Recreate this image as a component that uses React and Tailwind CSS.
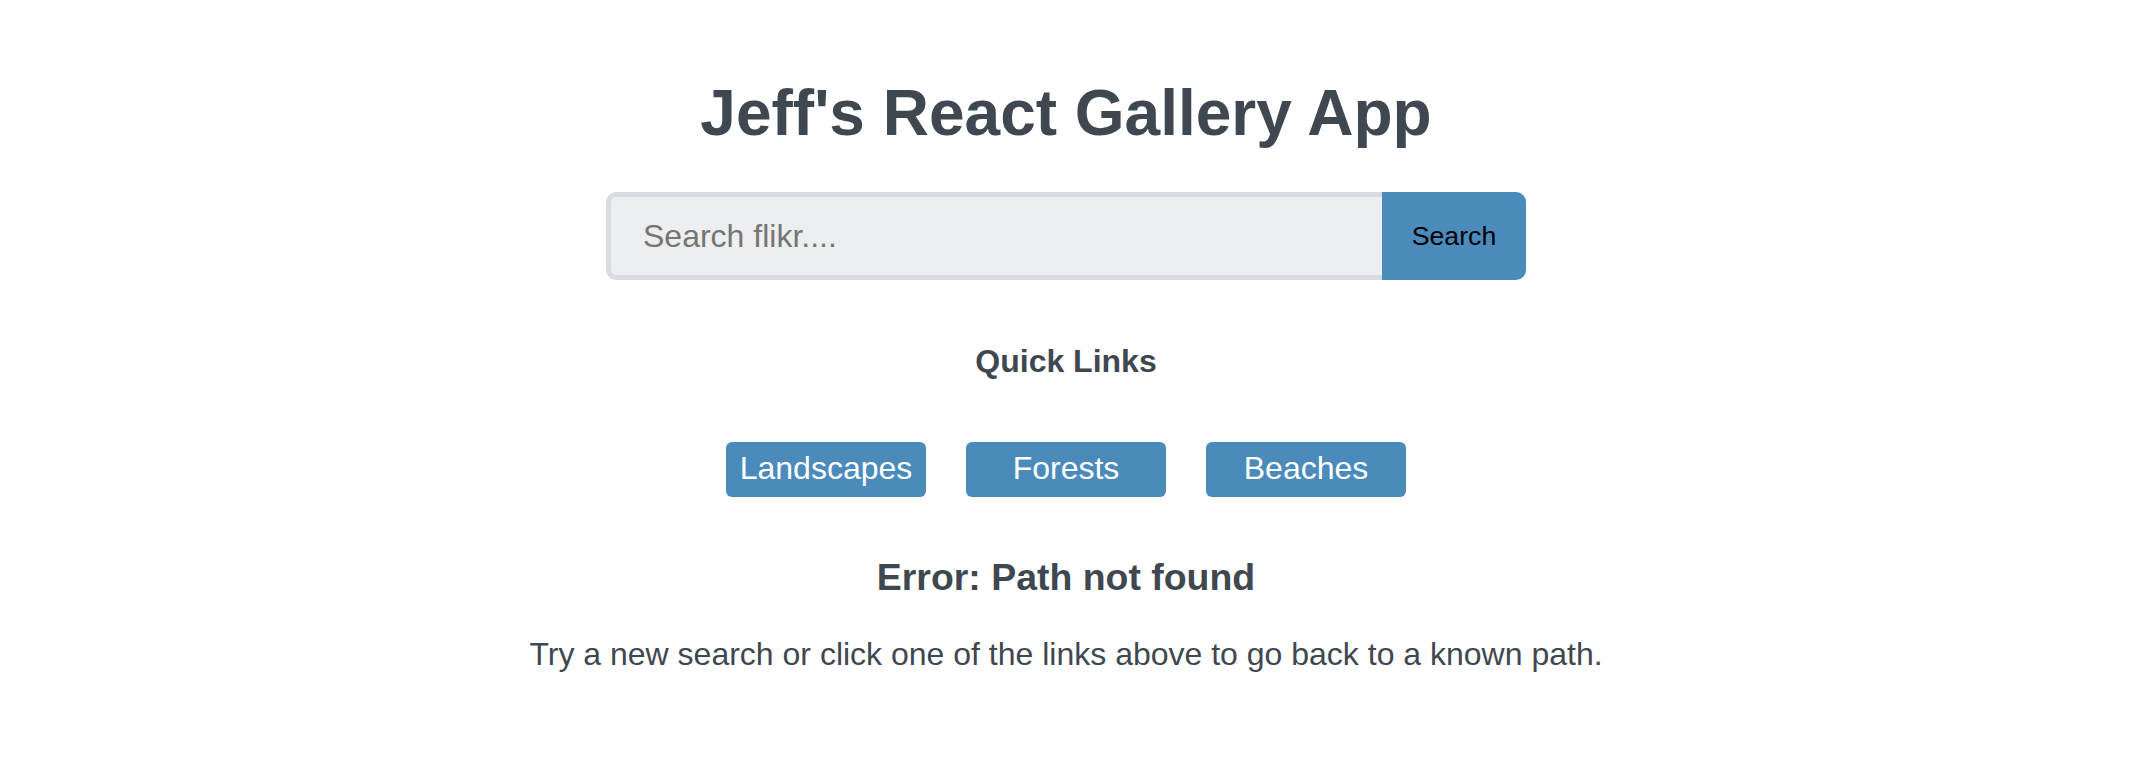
const LINKS = ["Landscapes", "Forests", "Beaches"];

export default function App() {
    return (
        <div className="min-h-[772px] bg-white pr-[6px] font-['Liberation_Sans',Arial,sans-serif] text-[#3f4851]">
            <div className="flex flex-col items-center">
                <h1 className="mt-[81px] text-[64px] leading-[64px] font-bold">Jeff's React Gallery App</h1>

                <form className="mt-[47px] flex h-[88px] w-[920px]" onSubmit={e => e.preventDefault()}>
                    <input
                        type="search"
                        placeholder="Search flikr...."
                        className="h-full flex-1 rounded-l-[10px] border-[5px] border-r-0 border-[#d8dbdf] bg-[#edeef0] pl-[32px] text-[32px] leading-[32px] text-[#3f4851] outline-none placeholder:text-[#757575]"
                    />
                    <button type="submit" className="h-full w-[144px] rounded-r-[10px] bg-[#4a8bbb] text-[26.67px] text-black">
                        Search
                    </button>
                </form>

                <h4 className="mt-[65px] text-[32px] leading-[32px] font-bold">Quick Links</h4>

                <ul className="mt-[65px] flex gap-[40px]">
                    {LINKS.map(l => (
                        <li key={l}>
                            <a href="#" className="block w-[200px] rounded-[6px] bg-[#4a8bbb] pt-[10px] pb-[13px] text-center text-[32px] leading-[32px] text-white">
                                {l}
                            </a>
                        </li>
                    ))}
                </ul>

                <h3 className="mt-[62px] text-[37.44px] leading-[37.44px] font-bold">Error: Path not found</h3>
                <p className="mt-[42px] text-[32px] leading-[32px]">Try a new search or click one of the links above to go back to a known path.</p>
            </div>
        </div>
    );
}
